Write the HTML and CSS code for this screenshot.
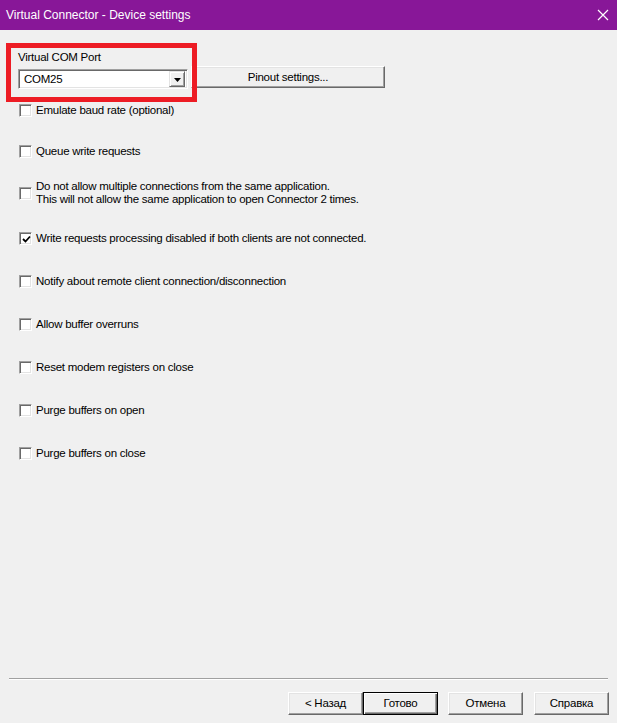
FILE: index.html
```html
<!DOCTYPE html>
<html>
<head>
<meta charset="utf-8">
<link rel="stylesheet" href="styles.css">
</head>
<body>
<div class="dialog">
  <div class="titlebar">
    <span class="title">Virtual Connector - Device settings</span>
    <svg class="close" width="12" height="12" viewBox="0 0 12 12"><path d="M1 1L11 11M11 1L1 11" stroke="#fff" stroke-width="1.2" fill="none"/></svg>
  </div>
  <div class="content">
    <div class="field-label">Virtual COM Port</div>
    <div class="combo-row">
      <div class="combo">
        <span class="combo-text">COM25</span>
        <span class="combo-btn"><svg width="7" height="4" viewBox="0 0 7 4"><path d="M0 0H7L3.5 4Z" fill="#000"/></svg></span>
      </div>
      <div class="btn pinout">Pinout settings...</div>
    </div>
    <div class="options">
      <div class="opt first"><span class="cb"></span><span>Emulate baud rate (optional)</span></div>
      <div class="opt"><span class="cb"></span><span>Queue write requests</span></div>
      <div class="opt multi"><span class="cb"></span><span>Do not allow multiple connections from the same application.<br>This will not allow the same application to open Connector 2 times.</span></div>
      <div class="opt"><span class="cb checked"><svg width="9" height="9" viewBox="0 0 9 9"><path d="M1 4L3.5 6.5L8 1.5" stroke="#000" stroke-width="1.8" fill="none"/></svg></span><span>Write requests processing disabled if both clients are not connected.</span></div>
      <div class="opt"><span class="cb"></span><span>Notify about remote client connection/disconnection</span></div>
      <div class="opt"><span class="cb"></span><span>Allow buffer overruns</span></div>
      <div class="opt"><span class="cb"></span><span>Reset modem registers on close</span></div>
      <div class="opt"><span class="cb"></span><span>Purge buffers on open</span></div>
      <div class="opt"><span class="cb"></span><span>Purge buffers on close</span></div>
    </div>
  </div>
  <div class="separator"></div>
  <div class="footer">
    <div class="btn fbtn">&lt; Назад</div>
    <div class="btn fbtn default">Готово</div>
    <div class="btn fbtn gap">Отмена</div>
    <div class="btn fbtn gap2">Справка</div>
  </div>
  <div class="highlight"></div>
</div>
</body>
</html>
```
FILE: styles.css
```css
* { box-sizing: border-box; }
html, body { margin: 0; padding: 0; }
body {
  width: 617px;
  height: 723px;
  background: #f0f0f0;
  font-family: "Liberation Sans", Arial, sans-serif;
  font-size: 11.5px;
  letter-spacing: -0.25px;
  color: #000;
  overflow: hidden;
}
.dialog {
  position: relative;
  width: 617px;
  height: 723px;
  display: flex;
  flex-direction: column;
}
.titlebar {
  height: 30px;
  background: #881798;
  color: #fff;
  display: flex;
  align-items: center;
  justify-content: space-between;
  padding: 0 8px 1px 6px;
  font-size: 12px;
  letter-spacing: 0;
}
.close { margin-top: 1px; }
.content {
  flex: 1;
  padding: 21px 0 0 18px;
}
.field-label {
  line-height: 13px;
  height: 13px;
  margin-bottom: 2px;
}
.combo-row {
  display: flex;
  align-items: flex-start;
}
.combo {
  width: 170px;
  height: 20px;
  margin-top: 3px;
  background: #fff;
  border-top: 1px solid #a0a0a0;
  border-left: 1px solid #a0a0a0;
  border-right: 1px solid #fff;
  border-bottom: 1px solid #fff;
  box-shadow: inset 1px 1px 0 #696969, inset -1px -1px 0 #e3e3e3;
  display: flex;
  align-items: center;
  justify-content: space-between;
  padding: 2px 2px 2px 5px;
}
.combo-text { line-height: 14px; }
.combo-btn {
  width: 16px;
  height: 16px;
  background: #f0f0f0;
  border-top: 1px solid #e3e3e3;
  border-left: 1px solid #e3e3e3;
  border-right: 1px solid #696969;
  border-bottom: 1px solid #696969;
  box-shadow: inset 1px 1px 0 #fff, inset -1px -1px 0 #a0a0a0;
  display: flex;
  align-items: center;
  justify-content: center;
  padding-top: 1px;
}
.btn {
  background: #f0f0f0;
  border-top: 1px solid #fff;
  border-left: 1px solid #fff;
  border-right: 1px solid #696969;
  border-bottom: 1px solid #696969;
  box-shadow: inset -1px -1px 0 #a0a0a0, inset 1px 1px 0 #e3e3e3;
  display: flex;
  align-items: center;
  justify-content: center;
}
.pinout {
  width: 194px;
  height: 22px;
  margin-left: 3px;
  margin-top: 0;
  padding-bottom: 1px;
}
.options {
  margin-top: 15px;
  padding-left: 1px;
  display: flex;
  flex-direction: column;
  gap: 30px;
}
.opt {
  display: flex;
  align-items: center;
  line-height: 13px;
  min-height: 13px;
}
.opt.first { margin-bottom: -2px; }
.opt.multi {
  margin-top: -8px;
  margin-bottom: -4px;
}
.cb {
  width: 13px;
  height: 13px;
  flex: none;
  background: #fff;
  border-top: 1px solid #a0a0a0;
  border-left: 1px solid #a0a0a0;
  border-right: 1px solid #fff;
  border-bottom: 1px solid #fff;
  box-shadow: inset 1px 1px 0 #696969, inset -1px -1px 0 #e3e3e3;
  margin-right: 4px;
  display: flex;
  align-items: center;
  justify-content: center;
}
.cb svg { margin-left: 1px; margin-top: 1px; }
.separator {
  margin: 0 9px;
  height: 2px;
  border-top: 1px solid #a0a0a0;
  border-bottom: 1px solid #fff;
}
.footer {
  display: flex;
  justify-content: flex-end;
  padding: 12px 8px 8px 0;
}
.fbtn {
  width: 75px;
  height: 23px;
  padding-bottom: 1px;
}
.fbtn.default {
  border: 1px solid #000;
  box-shadow: inset 1px 1px 0 #fff, inset -1px -1px 0 #696969, inset -2px -2px 0 #a0a0a0;
}
.fbtn.gap { margin-left: 10px; }
.fbtn.gap2 { margin-left: 11px; }
.highlight {
  position: absolute;
  left: 6px;
  top: 43px;
  width: 191px;
  height: 59px;
  border: 5px solid #ed1c24;
  pointer-events: none;
}
```
